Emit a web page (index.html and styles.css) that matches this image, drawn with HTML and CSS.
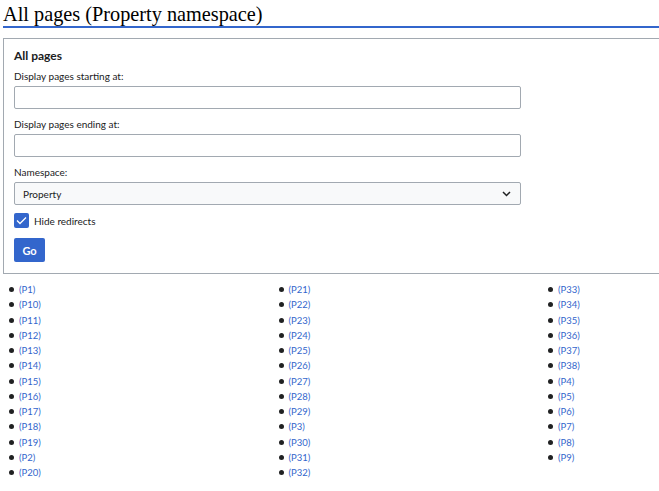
FILE: index.html
```html
<!DOCTYPE html>
<html lang="en">
<head>
<meta charset="utf-8">
<title>All pages (Property namespace)</title>
<link rel="stylesheet" href="styles.css">
</head>
<body>
<div class="page">
  <h1 class="title">All pages (Property namespace)</h1>
  <form class="box">
    <div class="box-title">All pages</div>
    <div class="field">
      <label class="label">Display pages starting at:</label>
      <div class="input"></div>
    </div>
    <div class="field">
      <label class="label">Display pages ending at:</label>
      <div class="input"></div>
    </div>
    <div class="field">
      <label class="label">Namespace:</label>
      <div class="input select">
        <span>Property</span>
        <svg class="chev" width="9" height="6" viewBox="0 0 9 6"><path d="M1 1l3.5 3.5L8 1" fill="none" stroke="#202122" stroke-width="1.5"/></svg>
      </div>
    </div>
    <div class="check-row">
      <span class="check"><svg width="11" height="9" viewBox="0 0 11 9"><path d="M1 4.5l3 3L10 1.5" fill="none" stroke="#fff" stroke-width="1.3"/></svg></span>
      <span class="check-label">Hide redirects</span>
    </div>
    <div class="btn">Go</div>
  </form>
  <ul class="list">
    <li><a>(P1)</a></li><li><a>(P10)</a></li><li><a>(P11)</a></li><li><a>(P12)</a></li><li><a>(P13)</a></li><li><a>(P14)</a></li><li><a>(P15)</a></li><li><a>(P16)</a></li><li><a>(P17)</a></li><li><a>(P18)</a></li><li><a>(P19)</a></li><li><a>(P2)</a></li><li><a>(P20)</a></li>
    <li><a>(P21)</a></li><li><a>(P22)</a></li><li><a>(P23)</a></li><li><a>(P24)</a></li><li><a>(P25)</a></li><li><a>(P26)</a></li><li><a>(P27)</a></li><li><a>(P28)</a></li><li><a>(P29)</a></li><li><a>(P3)</a></li><li><a>(P30)</a></li><li><a>(P31)</a></li><li><a>(P32)</a></li>
    <li><a>(P33)</a></li><li><a>(P34)</a></li><li><a>(P35)</a></li><li><a>(P36)</a></li><li><a>(P37)</a></li><li><a>(P38)</a></li><li><a>(P4)</a></li><li><a>(P5)</a></li><li><a>(P6)</a></li><li><a>(P7)</a></li><li><a>(P8)</a></li><li><a>(P9)</a></li>
  </ul>
</div>
</body>
</html>
```
FILE: styles.css
```css
html, body {
  margin: 0;
  padding: 0;
  background: #fff;
}
.page {
  padding: 0 0 0 3px;
  color: #202122;
  font-family: "Lato", "Noto Sans", sans-serif;
}
.title {
  margin: 0;
  padding-top: 3px;
  font-family: "Liberation Serif", serif;
  font-weight: normal;
  font-size: 20.3px;
  line-height: 23px;
  color: #000;
  border-bottom: 2px solid #36c;
}
.box {
  margin: 10px 0 0;
  border: 1px solid #a2a9b1;
  border-right: none;
  padding: 9px 10px 11px;
}
.box-title {
  font-weight: bold;
  font-size: 12px;
  line-height: 16px;
}
.field {
  margin-top: 5px;
}
.field + .field {
  margin-top: 8px;
}
.label {
  display: block;
  font-size: 10px;
  line-height: 14px;
  margin-bottom: 3px;
}
.input {
  box-sizing: border-box;
  width: 507px;
  height: 23px;
  border: 1px solid #a2a9b1;
  border-radius: 2px;
  background: #fff;
}
.select {
  display: flex;
  align-items: center;
  justify-content: space-between;
  padding: 0 9px 0 8px;
  background: #f8f9fa;
  font-size: 10px;
}
.chev {
  display: block;
}
.check-row {
  display: flex;
  align-items: center;
  gap: 5px;
  margin-top: 8px;
  font-size: 10px;
}
.check {
  box-sizing: border-box;
  width: 15px;
  height: 15px;
  border-radius: 2px;
  background: #36c;
  display: flex;
  align-items: center;
  justify-content: center;
}
.check svg { display: block; }
.btn {
  box-sizing: border-box;
  width: 31px;
  height: 24px;
  margin-top: 10px;
  border-radius: 2px;
  background: #36c;
  color: #fff;
  font-weight: bold;
  font-size: 11px;
  display: flex;
  align-items: center;
  justify-content: center;
}
.list {
  list-style: none;
  margin: 8px 0 0;
  padding: 0 0 0 6px;
  display: grid;
  grid-template-columns: 269.5px 269.5px 1fr;
  grid-template-rows: repeat(13, 15.25px);
  grid-auto-flow: column;
  font-size: 9.5px;
}
.list li {
  display: flex;
  align-items: center;
}
.list li::before {
  content: "";
  width: 5px;
  height: 5px;
  border-radius: 50%;
  background: #202122;
  margin-right: 5px;
}
.list a {
  color: #36c;
}
```
